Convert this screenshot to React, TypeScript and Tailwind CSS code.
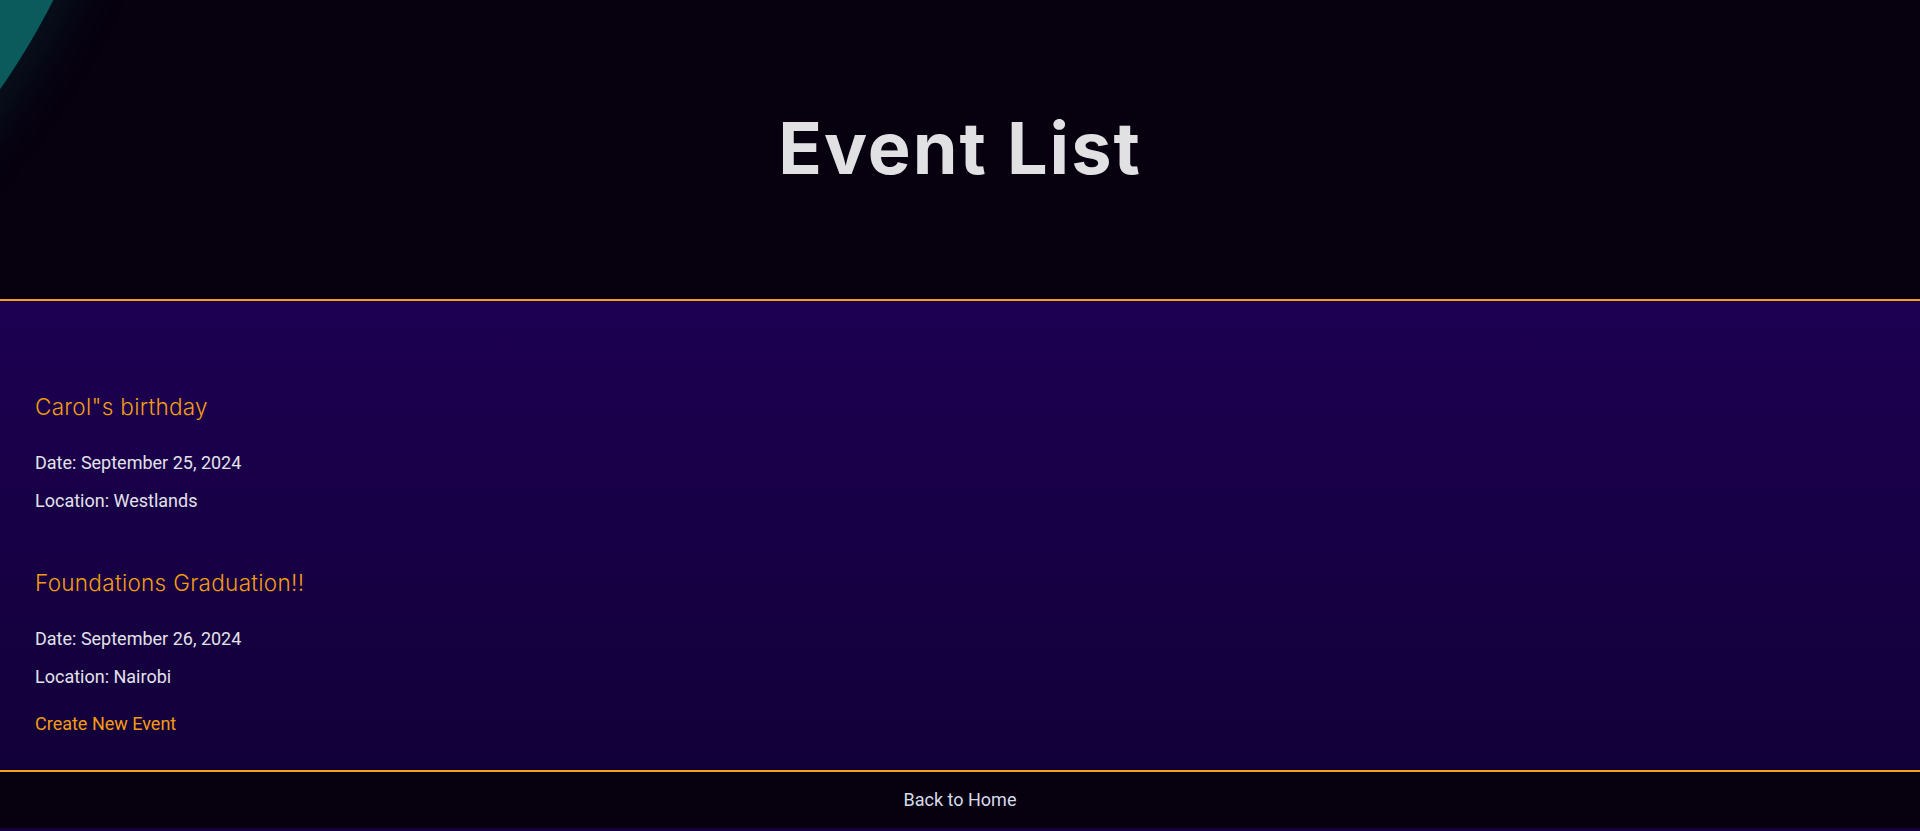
import React from "react";

const events = [
  { title: 'Carol"s birthday', date: "September 25, 2024", location: "Westlands" },
  { title: "Foundations Graduation!!", date: "September 26, 2024", location: "Nairobi" },
];

export default function App() {
  return (
    <div className="min-h-screen bg-[#150040] font-['Roboto',sans-serif]">
      <header className="relative h-[301px] overflow-hidden bg-[#07000f] border-b-2 border-[#f5a01a] flex items-center justify-center">
        <div className="absolute left-[-1332px] top-[-1062px] w-[1464px] h-[1464px] rounded-full bg-[#0b5b5d] shadow-[0_0_50px_15px_rgba(11,91,93,0.22)]" />
        <h1 className="relative text-[72px] leading-none font-bold tracking-[2px] text-[#e1e1e3] font-['Inter','Noto_Sans',sans-serif] mb-[4px]">
          Event List
        </h1>
      </header>

      <main className="bg-gradient-to-b from-[#1d0052] to-[#120039] pt-[90px] pb-[34px] px-[35px]">
        {events.map((e, i) => (
          <div key={i} className={i > 0 ? "mt-[54px]" : ""}>
            <h2 className="text-[22.5px] leading-[32px] font-light tracking-[0.3px] text-[#f39c12] font-['Inter','Noto_Sans',sans-serif] mb-[28px]">
              {e.title}
            </h2>
            <p className="text-[18px] leading-[24px] text-[#e2e2ea] mb-[14px]">Date: {e.date}</p>
            <p className="text-[18px] leading-[24px] text-[#e2e2ea]">Location: {e.location}</p>
          </div>
        ))}
        <a href="#" className="block mt-[23px] text-[18px] leading-[24px] text-[#f39c12]">
          Create New Event
        </a>
      </main>

      <footer className="h-[58px] bg-[#06000f] border-t-2 border-[#f5a01a] flex items-center justify-center">
        <a href="#" className="text-[18px] leading-[24px] text-[#d6dcea]">
          Back to Home
        </a>
      </footer>
    </div>
  );
}
